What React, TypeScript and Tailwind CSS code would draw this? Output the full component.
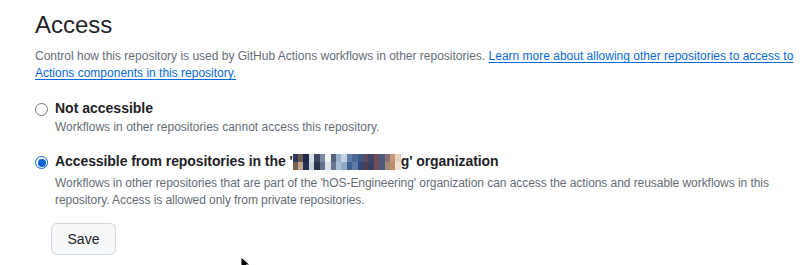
import React from 'react';

const blur = [
  ['#2e3a58', '#6a5a55', '#1f2a48', '#d8dde6', '#3b4560', '#7c8aa3', '#eef0f4', '#56627a', '#9ab0cc', '#c4d2e4', '#5f7fa6', '#4a6a94', '#3c5a86', '#5e4b5e', '#3f4466', '#6a4c5a', '#51597a', '#8a7078', '#c49a78', '#e8d3c0'],
  ['#7a6250', '#bfa58f', '#243050', '#c9d0dc', '#28324c', '#66708a', '#dde2ea', '#6b7790', '#a8bfd8', '#8fa8c6', '#3f6190', '#5b7aa4', '#2f4a78', '#4e3f52', '#3a3f60', '#704f5a', '#4f5878', '#a88a78', '#b98e6c', '#f1e2d4'],
];

// pixelated org name, as in the screenshot
const Blurred = () => (
  <span className="inline-block h-[16px] w-[108px] align-[-4px]">
    {blur.map((row, i) => (
      <span key={i} className="flex">
        {row.map((c, j) => (
          <span key={j} className="block h-[8px] flex-1" style={{ backgroundColor: c }} />
        ))}
      </span>
    ))}
  </span>
);

const App = () => {
  return (
    <div className="relative h-[265px] w-[803px] overflow-hidden bg-white pl-[35px] pt-[10px] font-['Liberation_Sans',Arial,sans-serif] text-[#1f2328]">
      <h2 className="text-[24px] leading-[30px]">Access</h2>

      <p className="mt-[8px] text-[12px] leading-[17px] text-[#656d76]">
        Control how this repository is used by GitHub Actions workflows in other repositories.{' '}
        <a className="text-[#0969da] underline underline-offset-2">
          Learn more about allowing other repositories to access to Actions components in this repository.
        </a>
      </p>

      {/* Not accessible */}
      <div className="mt-[17px] flex gap-[7px]">
        <span className="mt-[4px] h-[13px] w-[13px] shrink-0 rounded-full border border-[#767676] bg-white" />
        <div>
          <div className="text-[14px] font-bold leading-[19px]">Not accessible</div>
          <div className="mt-[1px] text-[12px] leading-[17px] text-[#656d76]">
            Workflows in other repositories cannot access this repository.
          </div>
        </div>
      </div>

      {/* Org only */}
      <div className="mt-[16px] flex gap-[7px]">
        <span className="mt-[4px] flex h-[13px] w-[13px] shrink-0 items-center justify-center rounded-full border border-[#0b62d6] bg-white">
          <span className="h-[8px] w-[8px] rounded-full bg-[#0b62d6]" />
        </span>
        <div>
          <div className="text-[14px] font-bold leading-[19px] tracking-[-0.08px]">
            Accessible from repositories in the '<Blurred />g' organization
          </div>
          <div className="mt-[4px] pr-[10px] text-[12px] leading-[17px] tracking-[-0.06px] text-[#656d76]">
            Workflows in other repositories that are part of the 'hOS-Engineering' organization can access the actions and reusable workflows in this repository. Access is allowed only from private repositories.
          </div>
        </div>
      </div>

      <button className="ml-[16px] mt-[14px] h-[32px] w-[65px] rounded-[6px] border border-[#d0d7de] bg-[#f6f8fa] text-[14px] text-[#1f2328]">
        Save
      </button>

      {/* mouse pointer */}
      <svg className="absolute left-[240px] top-[256px]" width="12" height="14" viewBox="0 0 12 14">
        <path d="M1 1 L1 13 L4 10 L7 14 L9 13 L6 9 L10 9 Z" fill="#000" stroke="#fff" strokeWidth="1" />
      </svg>
    </div>
  );
};

export default App;
